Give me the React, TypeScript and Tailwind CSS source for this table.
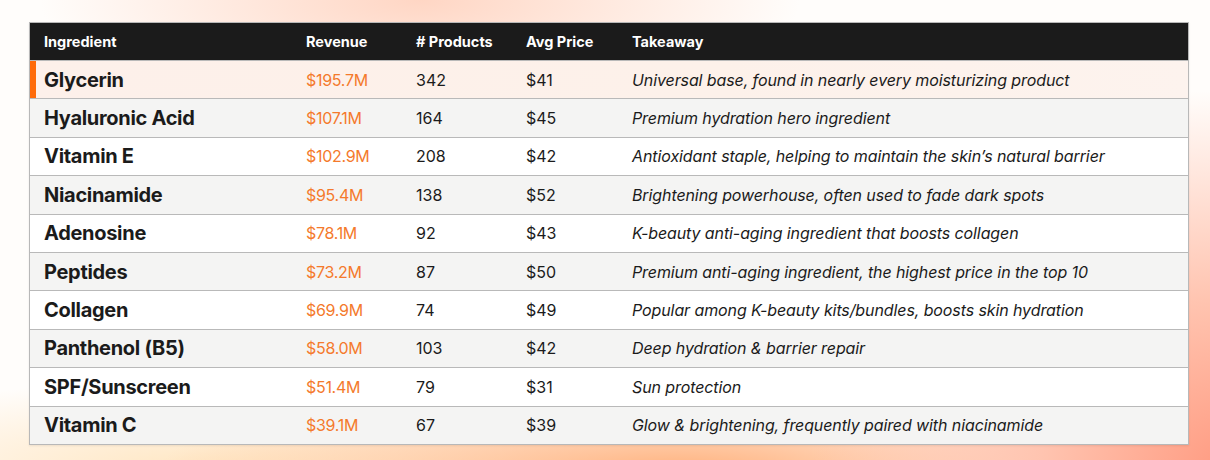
const ROWS = [
  { name: 'Glycerin', revenue: '$195.7M', products: '342', price: '$41', takeaway: 'Universal base, found in nearly every moisturizing product' },
  { name: 'Hyaluronic Acid', revenue: '$107.1M', products: '164', price: '$45', takeaway: 'Premium hydration hero ingredient' },
  { name: 'Vitamin E', revenue: '$102.9M', products: '208', price: '$42', takeaway: 'Antioxidant staple, helping to maintain the skin’s natural barrier' },
  { name: 'Niacinamide', revenue: '$95.4M', products: '138', price: '$52', takeaway: 'Brightening powerhouse, often used to fade dark spots' },
  { name: 'Adenosine', revenue: '$78.1M', products: '92', price: '$43', takeaway: 'K-beauty anti-aging ingredient that boosts collagen' },
  { name: 'Peptides', revenue: '$73.2M', products: '87', price: '$50', takeaway: 'Premium anti-aging ingredient, the highest price in the top 10' },
  { name: 'Collagen', revenue: '$69.9M', products: '74', price: '$49', takeaway: 'Popular among K-beauty kits/bundles, boosts skin hydration' },
  { name: 'Panthenol (B5)', revenue: '$58.0M', products: '103', price: '$42', takeaway: 'Deep hydration & barrier repair' },
  { name: 'SPF/Sunscreen', revenue: '$51.4M', products: '79', price: '$31', takeaway: 'Sun protection' },
  { name: 'Vitamin C', revenue: '$39.1M', products: '67', price: '$39', takeaway: 'Glow & brightening, frequently paired with niacinamide' },
]

const COLS = 'grid grid-cols-[262px_110px_110px_106px_1fr] items-center'

export default function App() {
  return (
    <div
      className="h-[460px] w-[1210px] overflow-hidden pl-[29px] pt-[22px] font-['Inter',sans-serif] text-[#1b1b1b] bg-[radial-gradient(ellipse_380px_120px_at_420px_0px,#ffd6c4_0%,transparent_100%),radial-gradient(ellipse_420px_380px_at_1230px_470px,#ff9a80_0%,#ffc4b0_45%,transparent_100%),radial-gradient(ellipse_520px_90px_at_680px_470px,#ffb27e_0%,transparent_100%),radial-gradient(ellipse_420px_90px_at_200px_470px,#ffe6c2_0%,transparent_100%),linear-gradient(#fffdfb,#fffdfb)]"
    >
      <div className="w-[1160px] border border-[#b8b8b8] shadow-[0_1px_2px_rgba(0,0,0,0.08)]">
        <div className={`${COLS} h-[37px] bg-[#1b1b1b] pl-[14px] text-[14.5px] font-bold text-white`}>
          <div>Ingredient</div>
          <div>Revenue</div>
          <div># Products</div>
          <div>Avg Price</div>
          <div>Takeaway</div>
        </div>
        {ROWS.map((row, i) => (
          <div
            key={row.name}
            className={`${COLS} relative h-[38.4px] border-t border-[#b9b9b9] pl-[14px] text-[16px] ${
              i === 0
                ? 'bg-[linear-gradient(90deg,#fdf0ea,#fdf1ea_60%,#fdf3ee)]'
                : i % 2 === 1
                  ? 'bg-[#f4f4f3]'
                  : 'bg-white'
            }`}
          >
            {i === 0 && <span className="absolute top-0 bottom-0 left-0 w-[6px] bg-[#ff6b0a]" />}
            <div className="text-[20px] font-bold tracking-[-0.3px]">{row.name}</div>
            <div className="text-[#f47a2c] tracking-[-0.3px]">{row.revenue}</div>
            <div>{row.products}</div>
            <div>{row.price}</div>
            <div className="italic tracking-[-0.1px]">{row.takeaway}</div>
          </div>
        ))}
      </div>
    </div>
  )
}
